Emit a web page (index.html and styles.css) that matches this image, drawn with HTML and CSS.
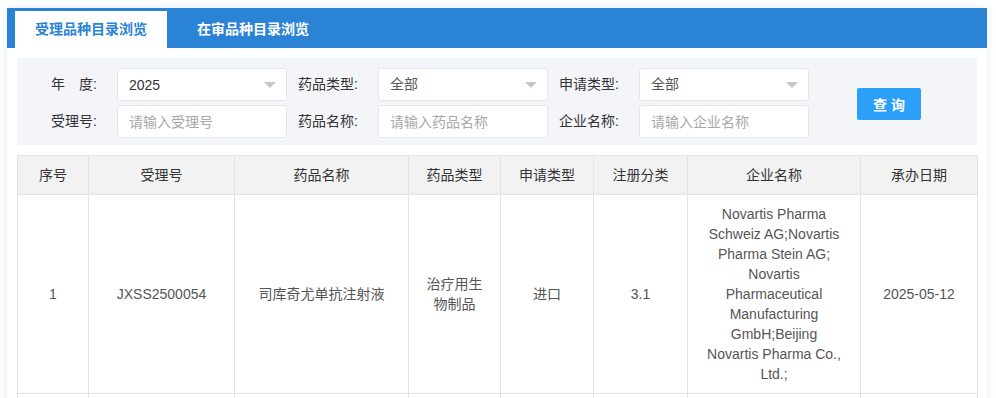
FILE: index.html
```html
<!DOCTYPE html>
<html lang="zh-CN">
<head>
    <meta charset="UTF-8">
    <title>受理品种目录浏览</title>
    <link rel="stylesheet" href="styles.css">
</head>
<body>
    <div class="page">
        <div class="tabs">
            <div class="tab tab-active">受理品种目录浏览</div>
            <div class="tab">在审品种目录浏览</div>
        </div>

        <div class="content">
            <form class="filter">
                <label class="field-label">年　度:</label>
                <div class="field select">
                    <span class="value">2025</span>
                    <i class="caret"></i>
                </div>
                <label class="field-label">药品类型:</label>
                <div class="field select">
                    <span class="value value-muted">全部</span>
                    <i class="caret"></i>
                </div>
                <label class="field-label">申请类型:</label>
                <div class="field select">
                    <span class="value value-muted">全部</span>
                    <i class="caret"></i>
                </div>
                <button type="button" class="btn-search">查询</button>

                <label class="field-label">受理号:</label>
                <input class="field" type="text" placeholder="请输入受理号">
                <label class="field-label">药品名称:</label>
                <input class="field" type="text" placeholder="请输入药品名称">
                <label class="field-label">企业名称:</label>
                <input class="field" type="text" placeholder="请输入企业名称">
            </form>

            <table class="list">
                <colgroup>
                    <col class="col-no">
                    <col class="col-code">
                    <col class="col-name">
                    <col class="col-type">
                    <col class="col-apply">
                    <col class="col-class">
                    <col class="col-company">
                    <col class="col-date">
                </colgroup>
                <thead>
                    <tr>
                        <th>序号</th>
                        <th>受理号</th>
                        <th>药品名称</th>
                        <th>药品类型</th>
                        <th>申请类型</th>
                        <th>注册分类</th>
                        <th>企业名称</th>
                        <th>承办日期</th>
                    </tr>
                </thead>
                <tbody>
                    <tr>
                        <td>1</td>
                        <td>JXSS2500054</td>
                        <td>司库奇尤单抗注射液</td>
                        <td>治疗用生物制品</td>
                        <td>进口</td>
                        <td>3.1</td>
                        <td>Novartis Pharma Schweiz AG;Novartis Pharma Stein AG; Novartis Pharmaceutical Manufacturing GmbH;Beijing Novartis Pharma Co., Ltd.;</td>
                        <td>2025-05-12</td>
                    </tr>
                    <tr class="row-empty">
                        <td></td>
                        <td></td>
                        <td></td>
                        <td></td>
                        <td></td>
                        <td></td>
                        <td></td>
                        <td></td>
                    </tr>
                </tbody>
            </table>
        </div>
    </div>
</body>
</html>
```

FILE: styles.css
```css
:root {
    --tab-blue: #2b83d6;
    --btn-blue: #2ba0f6;
    --panel-bg: #f4f5f9;
    --line: #e3e3e3;
    --text: #333;
}

* {
    box-sizing: border-box;
    margin: 0;
    padding: 0;
    font-family: 'Liberation Sans', 'Noto Sans CJK SC', sans-serif;
}

body {
    background: #fff;
    color: var(--text);
    font-size: 14px;
}

.page {
    width: 980px;
    margin: 8px 0 0 7px;
    background: #fff;
    box-shadow: 0 0 8px rgba(60, 110, 180, 0.14);
}

/* Tabs */
.tabs {
    display: flex;
    gap: 10px;
    height: 40px;
    padding: 3px 0 0 8px;
    background: var(--tab-blue);
}

.tab {
    width: 152px;
    height: 37px;
    line-height: 37px;
    text-align: center;
    font-weight: bold;
    color: #fff;
}

.tab-active {
    background: #fff;
    color: var(--tab-blue);
}

.content {
    padding: 10px 10px 0;
}

/* Filter panel */
.filter {
    display: grid;
    grid-template-columns: 77px 170px 91px 170px 91px 170px auto;
    grid-template-rows: 33px 33px;
    row-gap: 4px;
    padding: 10px 0 7px 23px;
    background: var(--panel-bg);
}

.field-label {
    padding-left: 11px;
    line-height: 33px;
    color: var(--text);
}

.field {
    display: flex;
    align-items: center;
    height: 33px;
    padding: 0 10px 0 11px;
    border: 1px solid #e4e7ed;
    border-radius: 3px;
    background: #fff;
    font-size: 14px;
    color: var(--text);
    outline: none;
}

.field::placeholder {
    color: #a8a8a8;
}

.value {
    line-height: 20px;
}

.value-muted {
    color: #555;
    margin-top: -2px;
}

.caret {
    margin-left: auto;
    width: 0;
    height: 0;
    border-left: 6px solid transparent;
    border-right: 6px solid transparent;
    border-top: 6px solid #c4c6cc;
}

.btn-search {
    grid-column: 7;
    grid-row: 1 / 3;
    align-self: center;
    width: 64px;
    height: 32px;
    margin: 1px 0 0 48px;
    padding-left: 4px;
    border: none;
    border-radius: 2px;
    background: var(--btn-blue);
    color: #fff;
    font-size: 14px;
    font-weight: bold;
    letter-spacing: 4px;
    cursor: pointer;
}

/* Result table */
.list {
    width: 960px;
    margin-top: 10px;
    border-collapse: collapse;
    table-layout: fixed;
}

.col-no { width: 71px; }
.col-code { width: 146px; }
.col-name { width: 174px; }
.col-type { width: 92px; }
.col-apply { width: 93px; }
.col-class { width: 94px; }
.col-company { width: 173px; }
.col-date { width: 117px; }

.list th,
.list td {
    padding: 9px 16px;
    border: 1px solid var(--line);
    line-height: 20px;
    text-align: center;
    vertical-align: middle;
}

.list th {
    background: #f2f2f2;
    font-weight: normal;
    color: var(--text);
}

.list td {
    color: #555;
}

.row-empty td {
    height: 38px;
}
```
